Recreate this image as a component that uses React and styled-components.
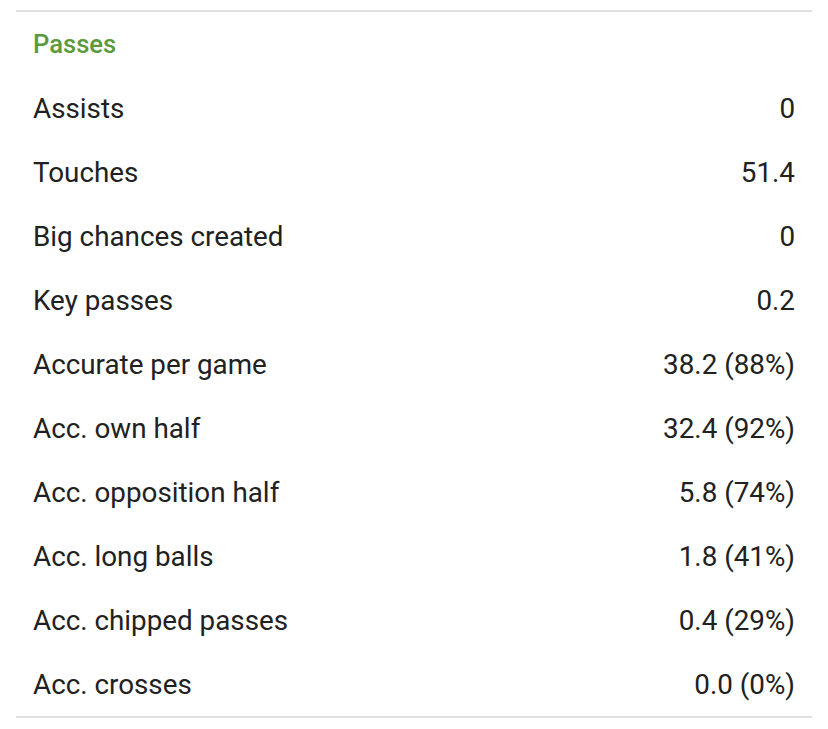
import React from "react";
import styled, { createGlobalStyle } from "styled-components";

const Global = createGlobalStyle`
  html, body { margin: 0; padding: 0; background: #ffffff; }
  body { font-family: Roboto, "Noto Sans", sans-serif; }
`;

const Page = styled.div`
  padding: 10px 16px 0 16px;
`;

const Card = styled.section`
  border-top: 2px solid #e0e0e0;
  border-bottom: 2px solid #e0e0e0;
`;

const Title = styled.h2`
  margin: 0;
  height: 64px;
  display: flex;
  align-items: center;
  padding: 0 17px;
  font-size: 25.6px;
  font-weight: 500;
  color: #5a9a3c;
`;

const Row = styled.div`
  height: 64px;
  display: flex;
  align-items: center;
  justify-content: space-between;
  padding: 0 17px;
  font-size: 27.8px;
  color: #212121;
`;

const rows = [
  ["Assists", "0"],
  ["Touches", "51.4"],
  ["Big chances created", "0"],
  ["Key passes", "0.2"],
  ["Accurate per game", "38.2 (88%)"],
  ["Acc. own half", "32.4 (92%)"],
  ["Acc. opposition half", "5.8 (74%)"],
  ["Acc. long balls", "1.8 (41%)"],
  ["Acc. chipped passes", "0.4 (29%)"],
  ["Acc. crosses", "0.0 (0%)"],
];

export default function App() {
  return (
    <Page>
      <Global />
      <Card>
        <Title>Passes</Title>
        {rows.map(([label, value]) => (
          <Row key={label}>
            <span>{label}</span>
            <span>{value}</span>
          </Row>
        ))}
      </Card>
    </Page>
  );
}
